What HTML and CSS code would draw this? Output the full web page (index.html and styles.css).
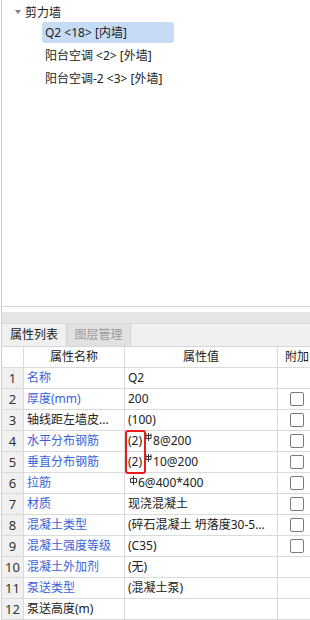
FILE: index.html
```html
<!DOCTYPE html>
<html lang="zh-CN">
<head>
    <meta charset="UTF-8">
    <title>构件属性</title>
    <link rel="stylesheet" href="styles.css">
</head>
<body>
    <div class="app">
        <div class="tree-panel">
            <div class="tree-root">
                <span class="caret"></span>
                <span>剪力墙</span>
            </div>
            <div class="tree-item selected">Q2 &lt;18&gt; [内墙]</div>
            <div class="tree-item">阳台空调 &lt;2&gt; [外墙]</div>
            <div class="tree-item">阳台空调-2 &lt;3&gt; [外墙]</div>
        </div>

        <div class="splitter"></div>

        <div class="tabs">
            <div class="tab active">属性列表</div>
            <div class="tab">图层管理</div>
        </div>

        <div class="grid">
            <div class="row head">
                <div class="cell num"></div>
                <div class="cell center">属性名称</div>
                <div class="cell center">属性值</div>
                <div class="cell extra">附加</div>
            </div>
            <div class="row">
                <div class="cell num">1</div>
                <div class="cell name link">名称</div>
                <div class="cell value">Q2</div>
                <div class="cell extra"></div>
            </div>
            <div class="row">
                <div class="cell num">2</div>
                <div class="cell name link">厚度(mm)</div>
                <div class="cell value">200</div>
                <div class="cell extra"><span class="check"></span></div>
            </div>
            <div class="row">
                <div class="cell num">3</div>
                <div class="cell name">轴线距左墙皮...</div>
                <div class="cell value">(100)</div>
                <div class="cell extra"><span class="check"></span></div>
            </div>
            <div class="row">
                <div class="cell num">4</div>
                <div class="cell name link">水平分布钢筋</div>
                <div class="cell value">(2)<svg class="bar-mark" width="8" height="8" viewBox="0 0 8 8"><path d="M3.5 0V8M0.5 2.5H6.5M1 0.5V5.5M6 0.5V5.5M1 5.5H6" fill="none" stroke="#333" stroke-width="1"/></svg>8@200</div>
                <div class="cell extra"><span class="check"></span></div>
            </div>
            <div class="row">
                <div class="cell num">5</div>
                <div class="cell name link">垂直分布钢筋</div>
                <div class="cell value">(2)<svg class="bar-mark" width="8" height="8" viewBox="0 0 8 8"><path d="M3.5 0V8M0.5 2.5H6.5M1 0.5V5.5M6 0.5V5.5M1 5.5H6" fill="none" stroke="#333" stroke-width="1"/></svg>10@200</div>
                <div class="cell extra"><span class="check"></span></div>
            </div>
            <div class="row">
                <div class="cell num">6</div>
                <div class="cell name link">拉筋</div>
                <div class="cell value"><svg class="bar-mark lead" width="8" height="9" viewBox="0 0 8 9"><path d="M3.5 0V9M0.5 2.5H6.5V6.5H0.5Z" fill="none" stroke="#333" stroke-width="1"/></svg>6@400*400</div>
                <div class="cell extra"><span class="check"></span></div>
            </div>
            <div class="row">
                <div class="cell num">7</div>
                <div class="cell name link">材质</div>
                <div class="cell value">现浇混凝土</div>
                <div class="cell extra"><span class="check"></span></div>
            </div>
            <div class="row">
                <div class="cell num">8</div>
                <div class="cell name link">混凝土类型</div>
                <div class="cell value">(碎石混凝土 坍落度30-50mm)</div>
                <div class="cell extra"><span class="check"></span></div>
            </div>
            <div class="row">
                <div class="cell num">9</div>
                <div class="cell name link">混凝土强度等级</div>
                <div class="cell value">(C35)</div>
                <div class="cell extra"><span class="check"></span></div>
            </div>
            <div class="row">
                <div class="cell num">10</div>
                <div class="cell name link">混凝土外加剂</div>
                <div class="cell value">(无)</div>
                <div class="cell extra"></div>
            </div>
            <div class="row">
                <div class="cell num">11</div>
                <div class="cell name link">泵送类型</div>
                <div class="cell value">(混凝土泵)</div>
                <div class="cell extra"></div>
            </div>
            <div class="row">
                <div class="cell num">12</div>
                <div class="cell name">泵送高度(m)</div>
                <div class="cell value"></div>
                <div class="cell extra"></div>
            </div>

            <div class="mark-box"></div>
        </div>
    </div>
</body>
</html>
```

FILE: styles.css
```css
body {
    margin: 0;
    font-family: "Noto Sans", "Noto Sans CJK SC", sans-serif;
    font-size: 12px;
    color: #222;
    background-color: white;
    overflow: hidden;
}
.app {
    margin-left: 1px;
    border-left: 1px solid #cfcfcf;
    width: 330px;
}
.tree-panel {
    height: 307px;
    border-bottom: 1px solid #d4d4d4;
    padding-top: 2px;
    box-sizing: border-box;
}
.tree-root {
    display: flex;
    align-items: center;
    height: 20px;
    padding-left: 13px;
}
.caret {
    width: 0;
    height: 0;
    border-left: 3px solid transparent;
    border-right: 3px solid transparent;
    border-top: 4px solid #808080;
    margin-right: 4px;
    margin-top: -1px;
}
.tree-item {
    height: 21px;
    line-height: 21px;
    margin-left: 40px;
    margin-bottom: 2px;
    padding-left: 3px;
    width: 129px;
    border-radius: 3px;
    white-space: nowrap;
}
.tree-item:first-of-type {
    margin-top: 1px;
}
.tree-item.selected {
    background-color: #c6dbf4;
}
.splitter {
    margin-top: 5px;
    height: 11px;
    background-color: #e6e6e6;
    border-bottom: 1px solid #d8d8d8;
}
.tabs {
    display: flex;
    height: 22px;
    background-color: #f0f0f0;
    border-bottom: 1px solid #d6d6d6;
}
.tab {
    width: 64px;
    line-height: 22px;
    text-align: center;
    color: #222;
}
.tab + .tab {
    width: 65px;
    background-color: #e1e1e1;
    color: #9a9a9a;
    border-left: 1px solid #d2d2d2;
    border-right: 1px solid #d2d2d2;
    box-sizing: border-box;
}
.grid {
    position: relative;
}
.row {
    display: grid;
    grid-template-columns: 22px 101px 153px 40px;
    height: 21px;
    border-bottom: 1px solid #dadada;
    box-sizing: border-box;
}
.cell {
    border-right: 1px solid #dadada;
    line-height: 20px;
    white-space: nowrap;
    overflow: hidden;
}
.num {
    background-color: #f0f0f0;
    text-align: center;
    font-size: 13px;
    color: #333;
}
.head .num {
    background-color: white;
}
.center {
    text-align: center;
}
.name {
    padding-left: 3px;
}
.link {
    color: #3a62d9;
}
.value {
    padding-left: 3px;
    text-overflow: ellipsis;
    padding-right: 8px;
}
.extra {
    padding-left: 7px;
}
.check {
    display: block;
    width: 14px;
    height: 14px;
    margin: 3px 0 0 5px;
    box-sizing: border-box;
    border: 1px solid #7a7a7a;
    border-radius: 2px;
    background-color: white;
}
.bar-mark {
    vertical-align: 4px;
    margin: 0 0 0 3px;
}
.bar-mark.lead {
    vertical-align: 2px;
    margin: 0 0 0 2px;
}
.mark-box {
    position: absolute;
    left: 123px;
    top: 83px;
    width: 21px;
    height: 44px;
    box-sizing: border-box;
    border: 2px solid #e81c1c;
    border-radius: 3px;
}
```
